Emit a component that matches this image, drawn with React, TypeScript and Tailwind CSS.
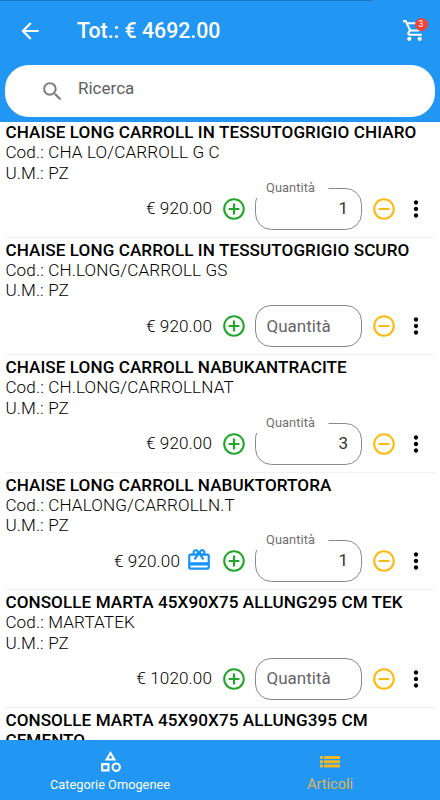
import React from 'react';
import {
  MdAddCircleOutline,
  MdArrowBack,
  MdMoreVert,
  MdOutlineCategory,
  MdOutlineShoppingCart,
  MdRedeem,
  MdRemoveCircleOutline,
  MdSearch,
} from 'react-icons/md';

interface Article {
  name: string;
  code: string;
  um: string;
  price: string;
  quantity?: number;
  gift?: boolean;
}

const ARTICLES: Article[] = [
  { name: 'CHAISE LONG CARROLL IN TESSUTOGRIGIO CHIARO', code: 'CHA LO/CARROLL G C', um: 'PZ', price: '920.00', quantity: 1 },
  { name: 'CHAISE LONG CARROLL IN TESSUTOGRIGIO SCURO', code: 'CH.LONG/CARROLL GS', um: 'PZ', price: '920.00' },
  { name: 'CHAISE LONG CARROLL NABUKANTRACITE', code: 'CH.LONG/CARROLLNAT', um: 'PZ', price: '920.00', quantity: 3 },
  { name: 'CHAISE LONG CARROLL NABUKTORTORA', code: 'CHALONG/CARROLLN.T', um: 'PZ', price: '920.00', quantity: 1, gift: true },
  { name: 'CONSOLLE MARTA 45X90X75 ALLUNG295 CM TEK', code: 'MARTATEK', um: 'PZ', price: '1020.00' },
];

const NEXT_ARTICLE = 'CONSOLLE MARTA 45X90X75 ALLUNG395 CM CEMENTO';

const QuantityField: React.FC<{ value?: number }> = ({ value }) => {
  if (value === undefined) {
    return (
      <div className="ml-[8.5px] flex h-[42px] w-[107px] items-center rounded-[16px] border border-[#888] pb-px pl-[10.5px] text-[17px] text-[#666]">
        Quantità
      </div>
    );
  }

  return (
    <div className="relative ml-[8.5px] h-[42px] w-[107px]">
      {/* Outline with a notch for the floating label */}
      <svg className="absolute inset-0" width="107" height="42" fill="none" stroke="#888">
        <path d="M73.5 .5H90.5a16 16 0 0 1 16 16v9a16 16 0 0 1-16 16h-74a16 16 0 0 1-16-16v-9a16 16 0 0 1 1.2-6.5" />
      </svg>
      <span className="absolute -top-[8px] left-[11px] text-[12.8px] leading-[16px] tracking-[0.1px] text-[#707070]">Quantità</span>
      <span className="flex h-full items-center justify-end pr-[14px] pb-[2px] text-[17px] text-[#333]">{value}</span>
    </div>
  );
};

const ArticleRow: React.FC<{ article: Article }> = ({ article }) => (
  <li className="h-[117.5px] shrink-0 pt-[2px] text-[17.1px] leading-[20.4px]">
    <div className="mx-[5px] flex h-full flex-col border-b border-[#f1f1f1]">
      <h2 className="pl-[0.4px] font-medium tracking-[0.08px] whitespace-nowrap text-black">{article.name}</h2>
      <p className="pl-[0.4px] font-light tracking-[0.13px] text-black">Cod.: {article.code}</p>
      <p className="pl-[0.4px] font-light tracking-[0.13px] text-black">U.M.: {article.um}</p>
      <div className="mt-[4.7px] flex h-[42px] items-center justify-end pr-[6.5px]">
        <span className="pb-px text-[17.1px] font-light tracking-[0.12px] text-black">€ {article.price}</span>
        {article.gift && <MdRedeem className="mb-[2px] ml-[6px] text-[26px] text-[#1492f8]" />}
        <MdAddCircleOutline className="ml-[8.5px] text-[26px] text-[#22a62b]" />
        <QuantityField value={article.quantity} />
        <MdRemoveCircleOutline className="ml-[8.5px] text-[26px] text-[#ffb90f]" />
        <MdMoreVert className="ml-[6px] text-[26px] text-black" />
      </div>
    </div>
  </li>
);

const App: React.FC = () => {
  return (
    <div className="flex h-[800px] w-[440px] flex-col overflow-hidden bg-white font-['Roboto',sans-serif]">
      <header className="h-[122px] shrink-0 bg-[#2196f3]">
        <div className="h-px w-[372px] bg-[#1b78c4]"></div>
        <div className="flex h-[64px] items-center pr-[13.5px] pb-[5px] pl-[17px] text-white">
          <MdArrowBack className="text-[26px]" />
          <h1 className="ml-[34px] flex-1 pt-px text-[21.3px] font-medium">Tot.: € 4692.00</h1>
          <div className="relative">
            <MdOutlineShoppingCart className="text-[25px]" />
            <span className="absolute -top-[0.5px] -right-[1px] flex h-[13px] w-[13px] items-center justify-center rounded-full bg-[#f44336] text-[8.5px]">
              3
            </span>
          </div>
        </div>
        <div className="mx-[5px] flex h-[52px] items-center rounded-[24px] bg-white pl-[34.5px]">
          <MdSearch className="text-[25px] text-[#808080]" />
          <span className="ml-[13.5px] pb-[5px] text-[17px] text-[#606060]">Ricerca</span>
        </div>
      </header>

      <main className="min-h-0 flex-1 overflow-hidden">
        <ul className="-mt-[2px] flex flex-col">
          {ARTICLES.map((article) => (
            <ArticleRow key={article.name} article={article} />
          ))}
          <li className="pt-[2px] pr-[20px] pl-[5.4px] text-[17.1px] leading-[20.4px] font-medium tracking-[0.08px] text-black">
            {NEXT_ARTICLE}
          </li>
        </ul>
      </main>

      <nav className="grid h-[60px] shrink-0 grid-cols-2 bg-[#2196f3]">
        <div className="flex flex-col items-center pt-[9px] text-white">
          <MdOutlineCategory className="text-[25px]" />
          <span className="mt-px text-[12.8px] leading-[19px]">Categorie Omogenee</span>
        </div>
        <div className="flex flex-col items-center pt-[16px] text-[#dfb355]">
          <svg width="20" height="12" fill="#edb92a">
            <path d="M0 0h3v3H0zM4 0h16v3H4zM0 4.3h3v2.9H0zM4 4.3h16v2.9H4zM0 8.5h3v2.9H0zM4 8.5h16v2.9H4z" />
          </svg>
          <span className="mt-[5.5px] text-[14.6px] leading-[20px]">Articoli</span>
        </div>
      </nav>
    </div>
  );
};

export default App;
